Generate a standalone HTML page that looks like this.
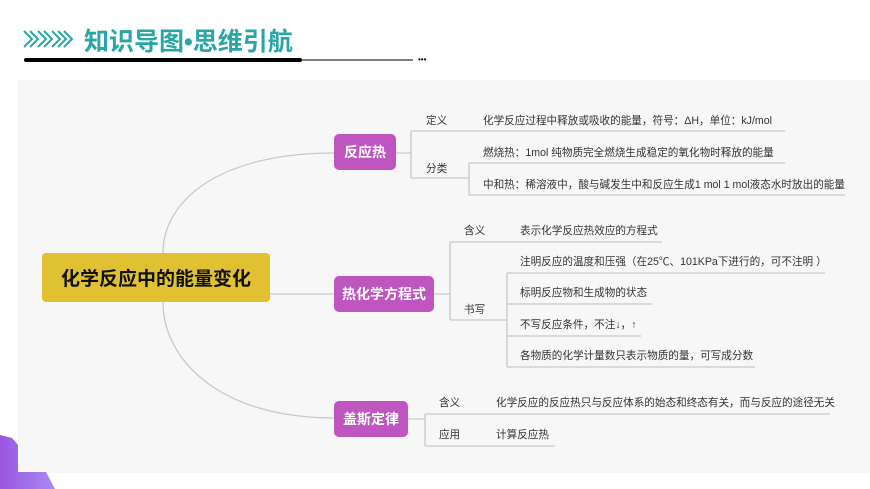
<!DOCTYPE html>
<html><head><meta charset="utf-8"><style>
body{margin:0;width:870px;height:489px;background:#fff;position:relative;overflow:hidden;font-family:"Liberation Sans","Noto Sans CJK SC",sans-serif}
.panel{position:absolute;left:18px;top:80px;width:852px;height:393px;background:#f7f7f7}
.t{position:absolute;font-size:10.6px;color:#333;white-space:nowrap;line-height:14px}
.n{position:absolute;background:#bf55c0;color:#fff;font-weight:bold;font-size:14px;border-radius:5px;display:flex;align-items:center;justify-content:center}
</style></head><body>
<div class="panel"></div>
<svg style="position:absolute;left:0;top:0" width="870" height="489">
<defs><linearGradient id="g" x1="0" x2="1"><stop offset="0" stop-color="#9a55e0"/><stop offset="1" stop-color="#a98af5"/></linearGradient></defs>
<polygon points="0,435 12,438 18,445 18,472 46,472 55,489 0,489" fill="url(#g)"/>
<g fill="none" stroke="#2aa6a6" stroke-width="2">
<path d="M24,31 L32,39 L24,47 M30,31 L38,39 L30,47"/>
<path d="M38,31 L46,39 L38,47 M44,31 L52,39 L44,47"/>
<path d="M52,31 L60,39 L52,47 M58,31 L66,39 L58,47 M64,31 L72,39 L64,47"/>
</g>
<line x1="26" y1="60" x2="300" y2="60" stroke="#000" stroke-width="4" stroke-linecap="round"/>
<line x1="300" y1="60" x2="413" y2="60" stroke="#000" stroke-width="1"/>
<text x="418" y="62" font-size="8" fill="#000">•••</text>
<g fill="none" stroke="#c8c8c8" stroke-width="1.3">
<path d="M163,253 C163,200 220,153 334,153"/>
<path d="M163,302 C163,360 220,418 334,418"/>
<path d="M270,294 L334,294"/>
<path d="M396,153 L411,153 M411,131 L411,178 M411,131 L785,131 M411,178 L469,178 M469,163 L469,195 M469,163 L785,163 M469,195 L845,195"/>
<path d="M434,294 L450,294 M450,242 L450,320 M450,242 L662,242 M450,320 L507,320 M507,273 L507,367 M507,273 L825,273 M507,304 L652,304 M507,336 L641,336 M507,367 L755,367"/>
<path d="M408,419 L425,419 M425,414 L425,446 M425,414 L830,414 M425,446 L555,446"/>
</g>
</svg>
<div class="t" style="left:84px;top:26px;font-size:25px;font-weight:bold;color:#2aa6a6;line-height:32px">知识导图•思维引航</div>
<div style="position:absolute;left:42px;top:253px;width:228px;height:49px;background:#e0c132;border-radius:4px;display:flex;align-items:center;justify-content:center;font-size:19px;font-weight:bold;color:#111">化学反应中的能量变化</div>
<div class="n" style="left:334px;top:134px;width:62px;height:36px">反应热</div>
<div class="n" style="left:334px;top:276px;width:100px;height:36px">热化学方程式</div>
<div class="n" style="left:334px;top:401px;width:74px;height:36px">盖斯定律</div>
<div class="t" style="left:426px;top:114px">定义</div>
<div class="t" style="left:483px;top:114px">化学反应过程中释放或吸收的能量，符号：ΔH，单位：kJ/mol</div>
<div class="t" style="left:426px;top:162px">分类</div>
<div class="t" style="left:483px;top:146px">燃烧热：1mol 纯物质完全燃烧生成稳定的氧化物时释放的能量</div>
<div class="t" style="left:483px;top:178px">中和热：稀溶液中，酸与碱发生中和反应生成1 mol 1 mol液态水时放出的能量</div>
<div class="t" style="left:464px;top:224px">含义</div>
<div class="t" style="left:520px;top:224px">表示化学反应热效应的方程式</div>
<div class="t" style="left:464px;top:303px">书写</div>
<div class="t" style="left:520px;top:255px">注明反应的温度和压强（在25℃、101KPa下进行的，可不注明 ）</div>
<div class="t" style="left:520px;top:286px">标明反应物和生成物的状态</div>
<div class="t" style="left:520px;top:318px">不写反应条件，不注↓，↑</div>
<div class="t" style="left:520px;top:349px">各物质的化学计量数只表示物质的量，可写成分数</div>
<div class="t" style="left:439px;top:396px">含义</div>
<div class="t" style="left:496px;top:396px">化学反应的反应热只与反应体系的始态和终态有关，而与反应的途径无关</div>
<div class="t" style="left:439px;top:428px">应用</div>
<div class="t" style="left:496px;top:428px">计算反应热</div>
</body></html>
